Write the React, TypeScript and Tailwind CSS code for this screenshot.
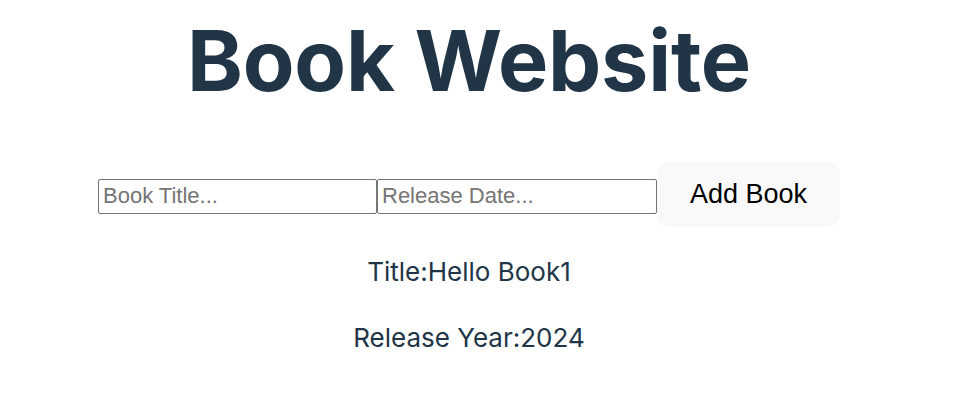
export default function App() {
  return (
    <div className="w-[938px] text-center text-[#213547] font-['Inter',sans-serif] bg-white min-h-[407px]">
      <h1 className="pt-[14px] text-[84.5px] font-bold leading-[1.1] tracking-[-0.2px]">Book Website</h1>

      {/* add book form */}
      <div className="mt-[55px] flex items-center justify-center">
        <input
          type="text"
          placeholder="Book Title..."
          className="mt-[4px] w-[279px] h-[35px] px-[4px] border border-[#767676] rounded-[2px] text-[22px] font-['Liberation_Sans',Arial,sans-serif] text-black placeholder:text-[#757575] outline-none"
        />
        <input
          type="text"
          placeholder="Release Date..."
          className="mt-[4px] w-[280px] h-[35px] px-[4px] border border-[#767676] rounded-[2px] text-[22px] font-['Liberation_Sans',Arial,sans-serif] text-black placeholder:text-[#757575] outline-none"
        />
        <button className="w-[183px] h-[65px] rounded-[12px] bg-[#f9f9f9] text-[27px] text-black font-['Liberation_Sans',Arial,sans-serif]">
          Add Book
        </button>
      </div>

      <div className="mt-[25px] text-[26px] leading-[39px]">
        <p>Title:Hello Book1</p>
        <p className="mt-[27px]">Release Year:2024</p>
      </div>
    </div>
  );
}
